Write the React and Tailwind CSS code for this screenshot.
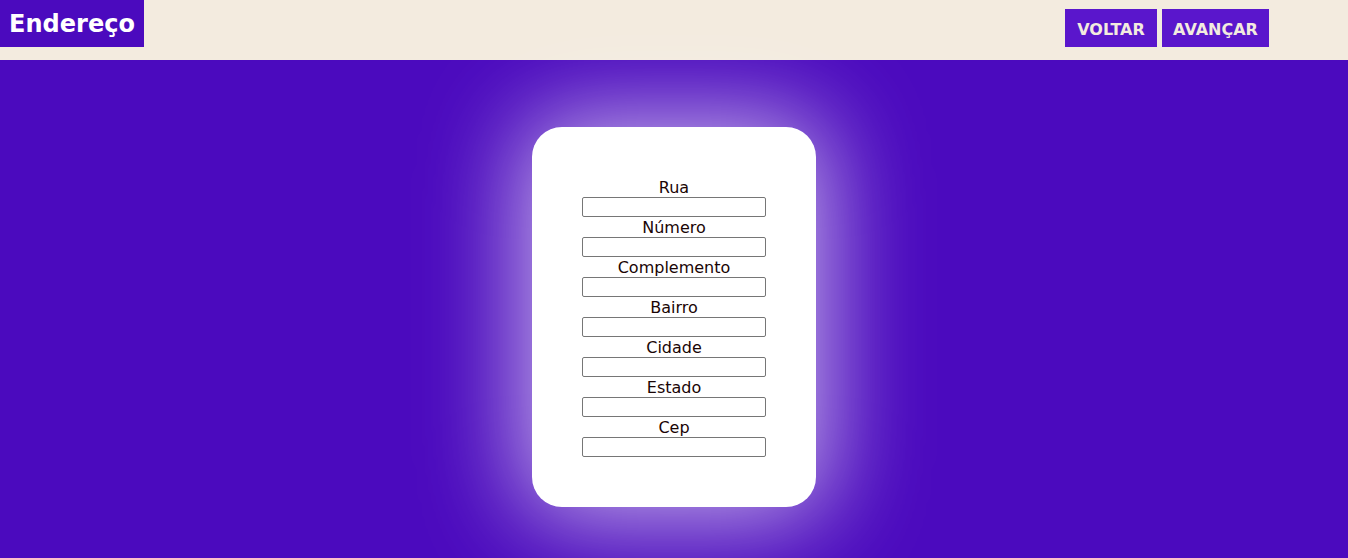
import React from "react";

const fields = ["Rua", "Número", "Complemento", "Bairro", "Cidade", "Estado", "Cep"];

const App = () => {
  return (
    <div className="w-full min-h-screen bg-[#4b0abe] font-['DejaVu_Sans',sans-serif]">
      {/* HEADER */}
      <header className="h-[60px] bg-[#f3ebdf] flex items-start justify-between">
        <h1 className="h-[47px] w-[144px] bg-[#4b0abe] text-white text-[24px] font-bold flex items-center justify-center leading-none">
          Endereço
        </h1>
        <div className="flex gap-[5px] pt-[9px] pr-[79px]">
          <button className="h-[38px] w-[92px] pt-[3px] bg-[#5a16cc] text-[#f3ebdf] text-[16px] font-bold">
            VOLTAR
          </button>
          <button className="h-[38px] w-[107px] pt-[3px] bg-[#5a16cc] text-[#f3ebdf] text-[16px] font-bold">
            AVANÇAR
          </button>
        </div>
      </header>

      {/* FORM */}
      <main className="h-[498px] flex justify-center pt-[67px]">
        <form className="w-[284px] h-[380px] bg-white rounded-[30px] shadow-[0_0_100px_10px_rgba(255,255,255,0.7)] flex flex-col items-center pt-[50px]">
          {fields.map((field) => (
            <label key={field} className="flex flex-col items-center text-[16px] text-[#1a0505]">
              <span className="block h-[20px] leading-[22px]">{field}</span>
              <input
                type="text"
                className="w-[184px] h-[20px] border border-[#767676] rounded-[2px] bg-white"
              />
            </label>
          ))}
        </form>
      </main>
    </div>
  );
};

export default App;
